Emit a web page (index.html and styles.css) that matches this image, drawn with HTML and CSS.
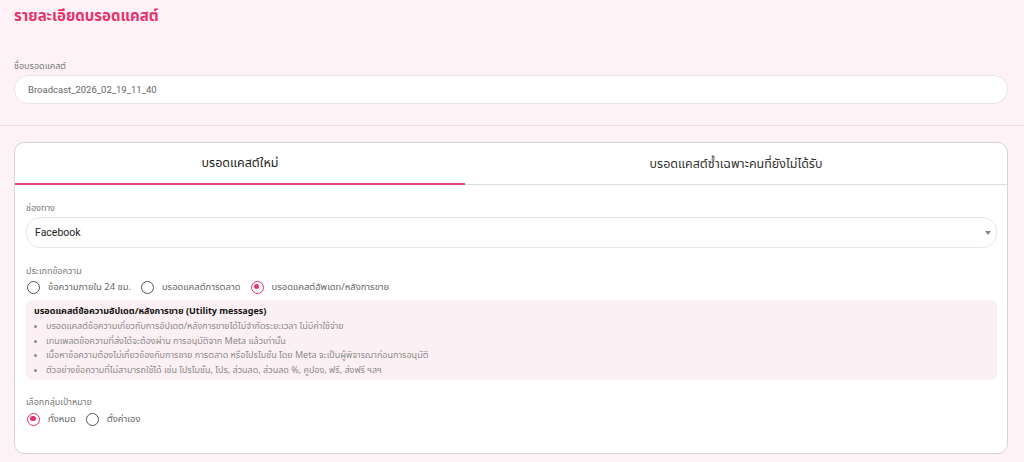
FILE: index.html
```html
<!DOCTYPE html>
<html lang="th">
<head>
<meta charset="utf-8">
<title>รายละเอียดบรอดแคสต์</title>
<link rel="stylesheet" href="styles.css">
</head>
<body>
<div class="page">
  <section class="top">
    <h1 class="title">รายละเอียดบรอดแคสต์</h1>
    <div class="field name-field">
      <label class="label">ชื่อบรอดแคสต์</label>
      <div class="input">Broadcast_2026_02_19_11_40</div>
    </div>
  </section>
  <div class="divider"></div>
  <section class="card">
    <div class="tabs">
      <div class="tab active">บรอดแคสต์ใหม่</div>
      <div class="tab">บรอดแคสต์ซ้ำเฉพาะคนที่ยังไม่ได้รับ</div>
    </div>
    <div class="card-body">
      <div class="field">
        <label class="label">ช่องทาง</label>
        <div class="select">
          <span>Facebook</span>
          <span class="caret"></span>
        </div>
      </div>
      <div class="field type-field">
        <label class="label">ประเภทข้อความ</label>
        <div class="radios">
          <span class="radio"><span class="dot"></span>ข้อความภายใน 24 ชม.</span>
          <span class="radio"><span class="dot"></span>บรอดแคสต์การตลาด</span>
          <span class="radio checked"><span class="dot"></span>บรอดแคสต์อัพเดท/หลังการขาย</span>
        </div>
      </div>
      <div class="info">
        <div class="info-title">บรอดแคสต์ข้อความอัปเดต/หลังการขาย (Utility messages)</div>
        <ul>
          <li>บรอดแคสต์ข้อความเกี่ยวกับการอัปเดต/หลังการขายได้ไม่จำกัดระยะเวลา ไม่มีค่าใช้จ่าย</li>
          <li>เทมเพลตข้อความที่ส่งได้จะต้องผ่าน การอนุมัติจาก Meta แล้วเท่านั้น</li>
          <li>เนื้อหาข้อความต้องไม่เกี่ยวข้องกับการขาย การตลาด หรือโปรโมชั่น โดย Meta จะเป็นผู้พิจารณาก่อนการอนุมัติ</li>
          <li>ตัวอย่างข้อความที่ไม่สามารถใช้ได้ เช่น โปรโมชั่น, โปร, ส่วนลด, ส่วนลด %, คูปอง, ฟรี, ส่งฟรี ฯลฯ</li>
        </ul>
      </div>
      <div class="field target-field">
        <label class="label">เลือกกลุ่มเป้าหมาย</label>
        <div class="radios">
          <span class="radio checked"><span class="dot"></span>ทั้งหมด</span>
          <span class="radio"><span class="dot"></span>ตั้งค่าเอง</span>
        </div>
      </div>
    </div>
  </section>
</div>
</body>
</html>
```

FILE: styles.css
```css
* { box-sizing: border-box; }
html, body {
  margin: 0;
  padding: 0;
  background: #fef2f6;
  font-family: "Noto Sans Thai", "Noto Sans", Roboto, "Liberation Sans", sans-serif;
  color: #222;
}
.page { width: 1024px; height: 462px; overflow: hidden; }
.top { padding: 7px 16px 21px 14px; }
.title {
  margin: 0;
  font-size: 15px;
  line-height: 20px;
  font-weight: 700;
  color: #e6336b;
}
.field { display: flex; flex-direction: column; }
.name-field { margin-top: 33px; }
.label {
  font-size: 9px;
  line-height: 12px;
  color: #777;
  margin-bottom: 3px;
}
.input {
  height: 29px;
  background: #fff;
  border: 1px solid #ece4e7;
  border-radius: 14px;
  padding: 0 13px;
  display: flex;
  align-items: center;
  font-family: Roboto, "Noto Sans Thai", sans-serif;
  font-size: 9.5px;
  color: #666;
}
.divider { height: 1px; background: #eed9df; }
.card {
  margin: 16px 16px 0 14px;
  background: #fff;
  border: 1px solid #d8d4d6;
  border-radius: 10px;
  height: 312px;
}
.tabs {
  display: grid;
  grid-template-columns: 450px 1fr;
  border-bottom: 1px solid #dcdcdc;
  height: 42px;
}
.tab {
  display: flex;
  align-items: center;
  justify-content: center;
  font-size: 12.5px;
  color: #333;
  padding-top: 1px;
}
.tab.active { border-bottom: 2px solid #e6487a; margin-bottom: -1px; color: #222; }
.card-body { padding: 17px 10px 0 11px; }
.select {
  height: 31px;
  border: 1px solid #ebe7e9;
  border-radius: 14px;
  display: flex;
  align-items: center;
  justify-content: space-between;
  padding: 0 5px 0 8px;
  font-family: Roboto, "Noto Sans Thai", sans-serif;
  font-size: 10.5px;
  color: #222;
}
.caret {
  width: 0; height: 0;
  border-left: 3px solid transparent;
  border-right: 3px solid transparent;
  border-top: 4px solid #888;
}
.type-field { margin-top: 17px; }
.type-field .label { margin-bottom: 2px; }
.radios { display: flex; gap: 9px; align-items: center; }
.radio {
  display: inline-flex;
  align-items: center;
  font-size: 9.4px;
  color: #666;
  line-height: 16px;
}
.dot {
  width: 13px; height: 13px;
  border-radius: 50%;
  border: 1.6px solid #555;
  margin-right: 8px;
  margin-left: 1px;
  position: relative;
  flex: none;
}
.radio.checked .dot { border-color: #e6336b; }
.radio.checked .dot::after {
  content: "";
  position: absolute;
  left: 2.2px; top: 2.2px;
  width: 5.4px; height: 5.4px;
  border-radius: 50%;
  background: #e6336b;
}
.info {
  margin-top: 5px;
  background: #fdf0f4;
  border-radius: 6px;
  padding: 5px 8px 6px 8px;
  height: 80px;
}
.info-title {
  font-size: 9px;
  font-weight: 700;
  color: #111;
  line-height: 13px;
}
.info ul { margin: 1px 0 0 0; padding: 0 0 0 12px; }
.info li {
  font-size: 9px;
  line-height: 14.5px;
  color: #8a8a8a;
}
.info li::marker { font-size: 8px; }
.target-field { margin-top: 16px; }
.target-field .label { margin-bottom: 3px; }
```
